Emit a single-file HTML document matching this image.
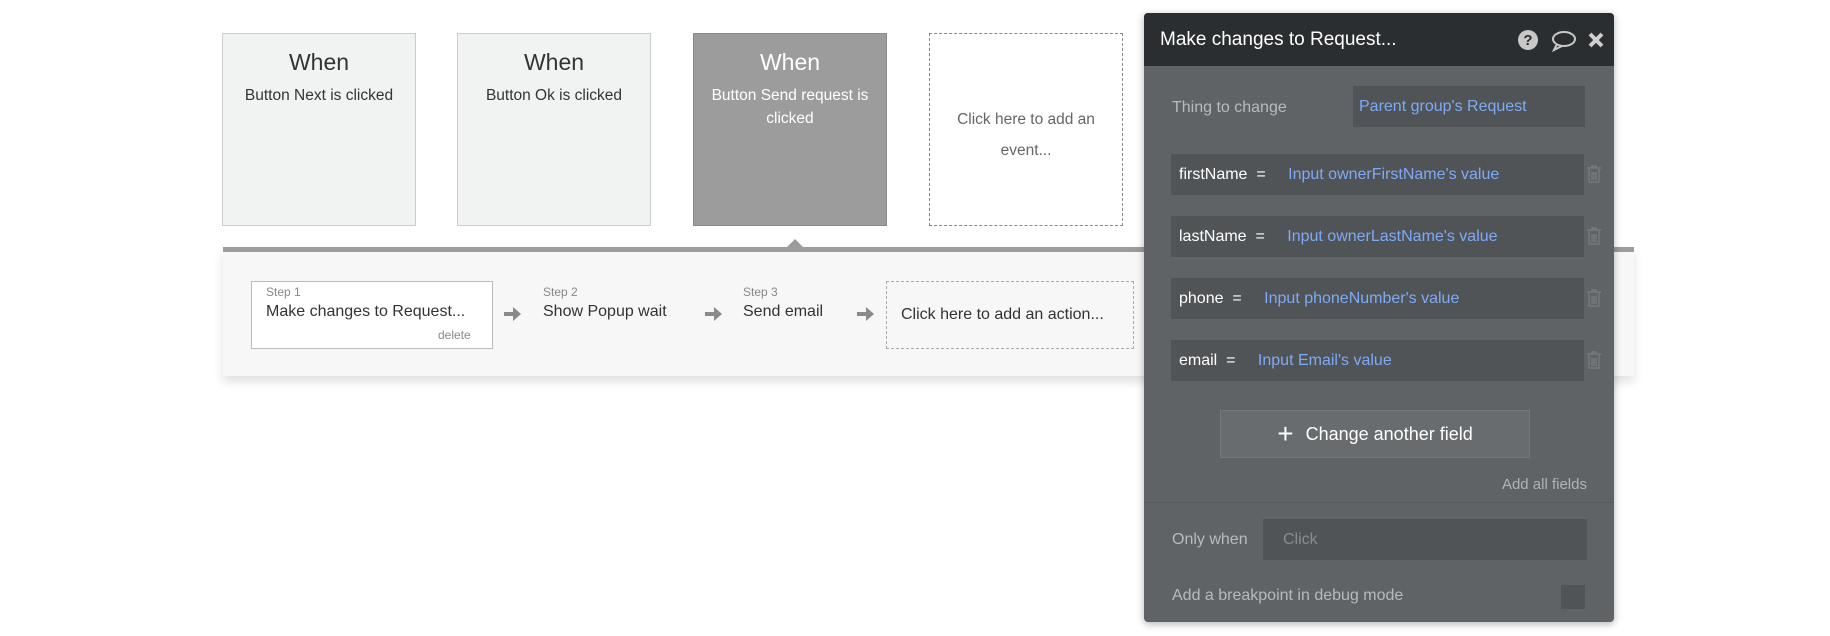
<!DOCTYPE html>
<html><head><meta charset="utf-8"><style>
*{box-sizing:border-box;margin:0;padding:0}
body{width:1830px;height:636px;background:#fff;position:relative;overflow:hidden;font-family:"Liberation Sans",sans-serif}
.a{position:absolute}
.card{position:absolute;top:33px;width:194px;height:193px;background:#f1f2f2;border:1px solid #c9cdcd;text-align:center;color:#333}
.card .w{font-size:23px;margin-top:15px}
.card .s{font-size:15.5px;margin-top:8px;line-height:23px;padding:0 8px}
.step{position:absolute;font-size:16px;color:#333}
.step small{display:block;font-size:12px;color:#888;margin-bottom:4px}
.arr{position:absolute;top:304px;width:20px;height:20px}
.row{position:absolute;left:1171px;width:413px;height:41px;background:#505457;color:#fff;font-size:16px;line-height:41px;padding-left:8px}
.row b{font-weight:normal;color:#7eaaf5;margin-left:18px}
.trash{position:absolute;left:1586px;width:16px;height:18px}
</style></head><body>
<div class="card" style="left:222px"><div class="w">When</div><div class="s">Button Next is clicked</div></div>
<div class="card" style="left:457px"><div class="w">When</div><div class="s">Button Ok is clicked</div></div>
<div class="card" style="left:693px;background:#9c9c9c;border-color:#8a8a8a;color:#fff"><div class="w">When</div><div class="s">Button Send request is clicked</div></div>
<div class="card" style="left:929px;background:#fff;border:1.5px dashed #888;color:#666"><div class="s" style="margin-top:70px;line-height:31px">Click here to add an event...</div></div>

<div class="a" style="left:223px;top:247px;width:1411px;height:129px;background:#f7f7f7;border-top:5px solid #9c9c9c;box-shadow:0 6px 10px rgba(0,0,0,.12)"></div>
<div class="a" style="left:786px;top:239px;width:0;height:0;border-left:9px solid transparent;border-right:9px solid transparent;border-bottom:9px solid #9c9c9c"></div>

<div class="a" style="left:251px;top:281px;width:242px;height:68px;border:1px solid #bbb;background:#fff"></div>
<div class="step" style="left:266px;top:285px"><small>Step 1</small>Make changes to Request...</div>
<div class="a" style="left:438px;top:328px;font-size:12px;color:#888">delete</div>
<div class="step" style="left:543px;top:285px"><small>Step 2</small>Show Popup wait</div>
<div class="step" style="left:743px;top:285px"><small>Step 3</small>Send email</div>
<div class="a" style="left:886px;top:281px;width:248px;height:68px;border:1px dashed #aaa;font-size:16px;color:#333;line-height:66px;padding-left:14px">Click here to add an action...</div>
<svg class="arr" style="left:502px" viewBox="0 0 20 20"><path d="M2 8h9V3l8 7-8 7v-5H2z" fill="#8a8a8a"/></svg>
<svg class="arr" style="left:703px" viewBox="0 0 20 20"><path d="M2 8h9V3l8 7-8 7v-5H2z" fill="#8a8a8a"/></svg>
<svg class="arr" style="left:855px" viewBox="0 0 20 20"><path d="M2 8h9V3l8 7-8 7v-5H2z" fill="#8a8a8a"/></svg>

<div class="a" style="left:1144px;top:13px;width:470px;height:609px;background:#5f6366;border-radius:4px;box-shadow:0 2px 8px rgba(0,0,0,.3);overflow:hidden">
 <div style="height:53px;background:#2a2e30;color:#fff;font-size:19px;line-height:53px;padding-left:16px">Make changes to Request...</div>
</div>
<svg class="a" style="left:1517px;top:29px" width="24" height="22" viewBox="0 0 24 22"><circle cx="11" cy="11" r="10" fill="#c8c8c8"/><text x="11" y="16" font-size="15" font-weight="bold" text-anchor="middle" fill="#2a2e30" font-family="Liberation Sans">?</text></svg>
<svg class="a" style="left:1550px;top:30px" width="28" height="22" viewBox="0 0 28 22"><ellipse cx="14" cy="9" rx="11" ry="7" fill="none" stroke="#c8c8c8" stroke-width="2"/><path d="M7 14l-3 6 8-4" fill="none" stroke="#c8c8c8" stroke-width="2"/></svg>
<svg class="a" style="left:1587px;top:31px" width="18" height="18" viewBox="0 0 18 18"><path d="M3 3l12 12M15 3L3 15" stroke="#d0d0d0" stroke-width="4"/></svg>

<div class="a" style="left:1172px;top:99px;font-size:16px;color:#b8bbbd">Thing to change</div>
<div class="a" style="left:1353px;top:86px;width:232px;height:41px;background:#505457;color:#7eaaf5;font-size:16px;line-height:41px;padding-left:6px">Parent group's Request</div>

<div class="row" style="top:154px">firstName&nbsp; = <b>Input ownerFirstName's value</b></div>
<div class="row" style="top:216px">lastName&nbsp; = <b>Input ownerLastName's value</b></div>
<div class="row" style="top:278px">phone&nbsp; = <b>Input phoneNumber's value</b></div>
<div class="row" style="top:340px">email&nbsp; = <b>Input Email's value</b></div>
<svg class="trash" style="top:165px" viewBox="0 0 16 18"><path d="M1 3h14M6 3V1h4v2M3 4v13h10V4M6 7v8M8 7v8M10 7v8" fill="none" stroke="#767a7d" stroke-width="1.4"/></svg>
<svg class="trash" style="top:227px" viewBox="0 0 16 18"><path d="M1 3h14M6 3V1h4v2M3 4v13h10V4M6 7v8M8 7v8M10 7v8" fill="none" stroke="#767a7d" stroke-width="1.4"/></svg>
<svg class="trash" style="top:289px" viewBox="0 0 16 18"><path d="M1 3h14M6 3V1h4v2M3 4v13h10V4M6 7v8M8 7v8M10 7v8" fill="none" stroke="#767a7d" stroke-width="1.4"/></svg>
<svg class="trash" style="top:351px" viewBox="0 0 16 18"><path d="M1 3h14M6 3V1h4v2M3 4v13h10V4M6 7v8M8 7v8M10 7v8" fill="none" stroke="#767a7d" stroke-width="1.4"/></svg>

<div class="a" style="left:1220px;top:410px;width:310px;height:48px;background:#686c6f;border:1px solid #74787b;color:#fff;font-size:18px;line-height:46px;text-align:center"><span style="font-size:28px;vertical-align:-3px;margin-right:12px">+</span>Change another field</div>
<div class="a" style="left:1480px;top:476px;width:107px;text-align:right;font-size:15px;color:#b0b3b5">Add all fields</div>
<div class="a" style="left:1144px;top:502px;width:470px;height:1px;background:#575b5e"></div>
<div class="a" style="left:1172px;top:531px;font-size:16px;color:#b8bbbd">Only when</div>
<div class="a" style="left:1263px;top:519px;width:324px;height:41px;background:#505457;color:#8a8d90;font-size:16px;line-height:41px;padding-left:20px">Click</div>
<div class="a" style="left:1172px;top:587px;font-size:16px;color:#b8bbbd">Add a breakpoint in debug mode</div>
<div class="a" style="left:1561px;top:585px;width:24px;height:24px;background:#505457"></div>
</body></html>
